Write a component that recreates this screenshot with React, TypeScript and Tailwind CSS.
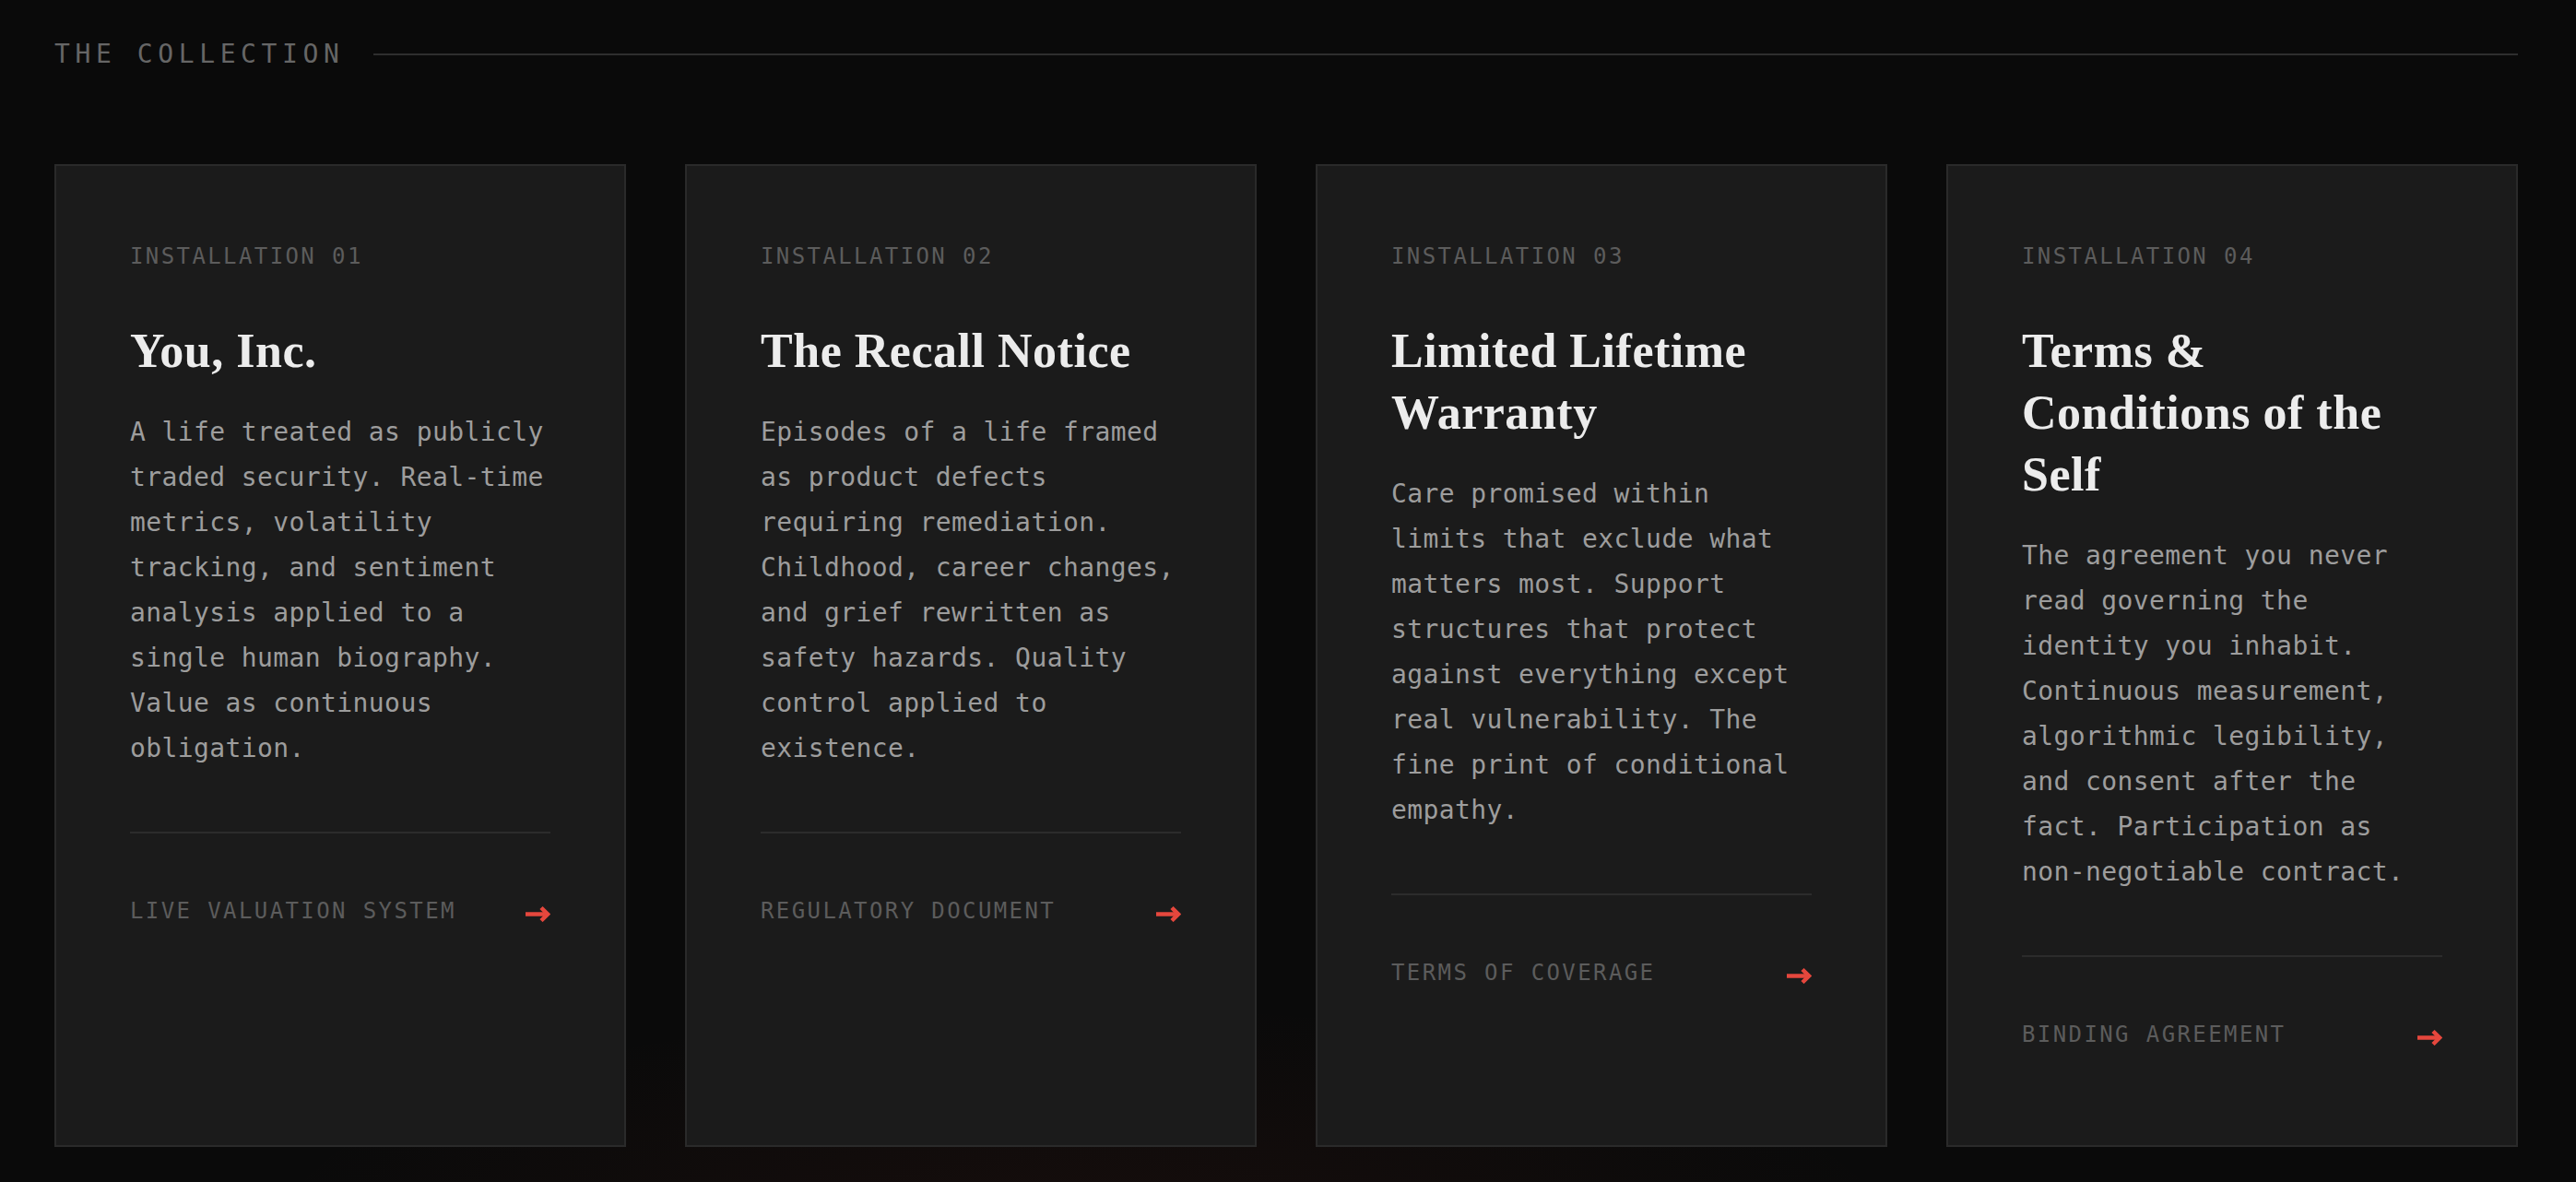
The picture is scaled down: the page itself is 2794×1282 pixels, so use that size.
import React from "react";

type Item = {
  num: string;
  title: string;
  body: string;
  footer: string;
};

const items: Item[] = [
  {
    num: "INSTALLATION 01",
    title: "You, Inc.",
    body:
      "A life treated as publicly traded security. Real-time metrics, volatility tracking, and sentiment analysis applied to a single human biography. Value as continuous obligation.",
    footer: "LIVE VALUATION SYSTEM",
  },
  {
    num: "INSTALLATION 02",
    title: "The Recall Notice",
    body:
      "Episodes of a life framed as product defects requiring remediation. Childhood, career changes, and grief rewritten as safety hazards. Quality control applied to existence.",
    footer: "REGULATORY DOCUMENT",
  },
  {
    num: "INSTALLATION 03",
    title: "Limited Lifetime Warranty",
    body:
      "Care promised within limits that exclude what matters most. Support structures that protect against everything except real vulnerability. The fine print of conditional empathy.",
    footer: "TERMS OF COVERAGE",
  },
  {
    num: "INSTALLATION 04",
    title: "Terms & Conditions of the Self",
    body:
      "The agreement you never read governing the identity you inhabit. Continuous measurement, algorithmic legibility, and consent after the fact. Participation as non-negotiable contract.",
    footer: "BINDING AGREEMENT",
  },
];

function Arrow() {
  return (
    <svg width="28" height="18" viewBox="0 0 28 18" fill="none" className="shrink-0">
      <path d="M1 9.5H24" stroke="#e5473d" strokeWidth="4.5" />
      <path d="M18 2.5L25 9.5L18 16.5" stroke="#e5473d" strokeWidth="4.5" strokeLinejoin="miter" />
    </svg>
  );
}

function Card({ item }: { item: Item }) {
  return (
    <div className="border-2 border-[#2a2a2a] bg-[#1b1b1b] px-[80px] pt-[80px] pb-[100px] flex flex-col">
      <div className="font-['DejaVu_Sans_Mono',monospace] text-[24px] leading-[36px] tracking-[0.1em] text-[#5c5c5c]">
        {item.num}
      </div>
      <h2 className="mt-[51px] font-['Liberation_Serif',serif] font-bold text-[52px] leading-[67px] tracking-[0.01em] text-[#ececec]">
        {item.title}
      </h2>
      <p className="mt-[30px] font-['DejaVu_Sans_Mono',monospace] text-[28px] leading-[49px] tracking-[0.4px] text-[#9d9d9d]">
        {item.body}
      </p>
      <div className="mt-[66px] border-t-2 border-[#2c2c2c] pt-[64px]">
        <div className="flex h-[40px] items-center justify-between">
          <span className="font-['DejaVu_Sans_Mono',monospace] text-[24px] leading-[36px] tracking-[0.1em] text-[#5c5c5c]">
            {item.footer}
          </span>
          <span className="mt-[6px]">
            <Arrow />
          </span>
        </div>
      </div>
    </div>
  );
}

export default function App() {
  return (
    <div className="min-h-[1282px] w-full bg-[#0a0a0a] bg-[radial-gradient(ellipse_900px_260px_at_42%_105%,rgba(190,60,40,0.07),transparent)] pl-[59px] pr-[63px] pt-[38px] pb-[38px]">
      <div className="flex h-[42px] items-center gap-[32px]">
        <span className="font-['DejaVu_Sans_Mono',monospace] text-[28px] leading-[42px] tracking-[0.2em] text-[#666666]">
          THE COLLECTION
        </span>
        <div className="h-[2px] flex-1 bg-[#2e2e2e]" />
      </div>
      <div className="mt-[98px] grid grid-cols-4 gap-[64px] items-stretch">
        {items.map((it) => (
          <Card key={it.num} item={it} />
        ))}
      </div>
    </div>
  );
}
